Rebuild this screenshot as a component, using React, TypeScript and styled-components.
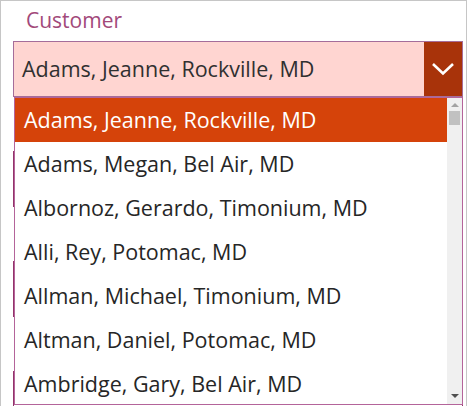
import React from "react";
import styled, { createGlobalStyle } from "styled-components";

const Global = createGlobalStyle`
  html, body { margin: 0; padding: 0; background: #ffffff; }
  body { font-family: "Open Sans", "Noto Sans", sans-serif; }
`;

const Frame = styled.div`
  position: relative;
  box-sizing: border-box;
  width: 467px;
  height: 406px;
  overflow: hidden;
  border: 1px solid #c6c6c6;
  border-bottom: none;
  padding: 0 3px 0 12px;
  display: flex;
  flex-direction: column;
`;

const Field = styled.div`
  display: flex;
  flex-direction: column;
  flex: none;
  height: 110px;
`;

const Label = styled.div`
  height: 40px;
  box-sizing: border-box;
  padding: 5px 0 0 13px;
  font-size: 21px;
  line-height: 28px;
  color: #a2497a;
`;

const Input = styled.div<{ $filled?: boolean }>`
  box-sizing: border-box;
  height: 56px;
  display: flex;
  align-items: stretch;
  border: 1px solid ${(p) => (p.$filled ? "#a56d9a" : "#93336a")};
  background: ${(p) => (p.$filled ? "#ffd5d1" : "#ffffff")};
`;

const Value = styled.div`
  flex: 1;
  display: flex;
  align-items: center;
  padding: 0 0 2px 8px;
  font-size: 21.5px;
  color: #303030;
  white-space: nowrap;
`;

const ChevronButton = styled.div`
  width: 38px;
  background: #a8330a;
  display: flex;
  align-items: center;
  justify-content: center;
`;

const List = styled.div`
  position: absolute;
  left: 13px;
  top: 96px;
  width: 449px;
  height: 308px;
  box-sizing: border-box;
  border: 1px solid #b4649a;
  background: #ffffff;
  display: flex;
`;

const Rows = styled.div`
  flex: 1;
  display: flex;
  flex-direction: column;
  overflow: hidden;
`;

const Row = styled.div<{ $selected?: boolean }>`
  flex: none;
  height: 44px;
  box-sizing: border-box;
  padding: 0 0 2px 9px;
  display: flex;
  align-items: center;
  font-size: 21.5px;
  white-space: nowrap;
  background: ${(p) => (p.$selected ? "#d5430a" : "#ffffff")};
  color: ${(p) => (p.$selected ? "#ffffff" : "#262626")};
`;

const Scrollbar = styled.div`
  width: 15px;
  background: #f0f0f0;
  display: flex;
  flex-direction: column;
  align-items: center;
`;

const Arrow = styled.div<{ $down?: boolean }>`
  width: 0;
  height: 0;
  border-left: 4px solid transparent;
  border-right: 4px solid transparent;
  ${(p) =>
    p.$down
      ? "border-top: 4px solid #505050; margin-top: auto; margin-bottom: 6px;"
      : "border-bottom: 4px solid #a3a3a3; margin-top: 5px;"}
`;

const Thumb = styled.div`
  width: 11px;
  height: 14px;
  margin-top: 4px;
  background: #c1c1c1;
`;

const customers = [
  "Adams, Jeanne, Rockville, MD",
  "Adams, Megan, Bel Air, MD",
  "Albornoz, Gerardo, Timonium, MD",
  "Alli, Rey, Potomac, MD",
  "Allman, Michael, Timonium, MD",
  "Altman, Daniel, Potomac, MD",
  "Ambridge, Gary, Bel Air, MD",
];

export default function App() {
  return (
    <>
      <Global />
      <Frame>
        <Field>
          <Label>Customer</Label>
          <Input $filled>
            <Value>Adams, Jeanne, Rockville, MD</Value>
            <ChevronButton>
              <svg width="24" height="14" viewBox="0 0 24 14">
                <polyline
                  points="2,2 12,11.5 22,2"
                  fill="none"
                  stroke="#ffffff"
                  strokeWidth="2.6"
                />
              </svg>
            </ChevronButton>
          </Input>
        </Field>
        {[1, 2, 3].map((n) => (
          <Field key={n}>
            <Label />
            <Input />
          </Field>
        ))}
        <List>
          <Rows>
            {customers.map((c, i) => (
              <Row key={c} $selected={i === 0}>
                {c}
              </Row>
            ))}
          </Rows>
          <Scrollbar>
            <Arrow />
            <Thumb />
            <Arrow $down />
          </Scrollbar>
        </List>
      </Frame>
    </>
  );
}
